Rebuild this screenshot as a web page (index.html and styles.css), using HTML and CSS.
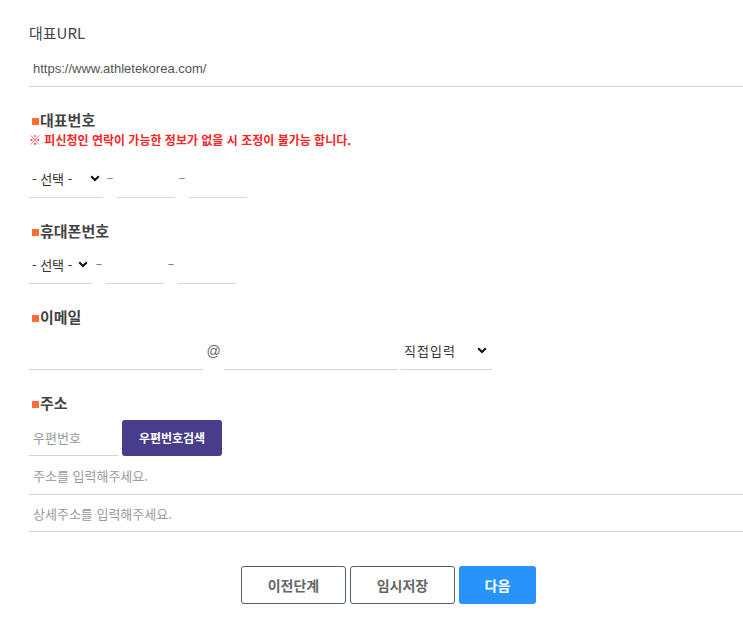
FILE: index.html
```html
<!DOCTYPE html>
<html lang="ko">
<head>
    <meta charset="UTF-8">
    <meta name="viewport" content="width=device-width, initial-scale=1.0">
    <title>단체 정보 입력</title>
    <link rel="stylesheet" href="styles.css">
</head>
<body>

    <div id="form-wrap">
        <div class="field">
            <div class="label plain">대표URL</div>
            <input class="text-input full url" type="text" value="https://www.athletekorea.com/">
        </div>

        <div class="field">
            <div class="label"><span class="mark"></span>대표번호</div>
            <p class="notice">※ 피신청인 연락이 가능한 정보가 없을 시 조정이 불가능 합니다.</p>
            <div class="row">
                <span class="select-wrap w74">
                    <select class="select-input">
                        <option>- 선택 -</option>
                        <option>02</option>
                        <option>031</option>
                    </select>
                    <svg class="chevron" width="10" height="7" viewBox="0 0 10 7"><path d="M1.2 1.2 L5 5 L8.8 1.2" fill="none" stroke="#111" stroke-width="2"/></svg>
                </span>
                <span class="dash">–</span>
                <input class="text-input w58" type="text">
                <span class="dash">–</span>
                <input class="text-input w58" type="text">
            </div>
        </div>

        <div class="field">
            <div class="label"><span class="mark"></span>휴대폰번호</div>
            <div class="row">
                <span class="select-wrap w63">
                    <select class="select-input">
                        <option>- 선택 -</option>
                        <option>010</option>
                        <option>011</option>
                    </select>
                    <svg class="chevron" width="10" height="7" viewBox="0 0 10 7"><path d="M1.2 1.2 L5 5 L8.8 1.2" fill="none" stroke="#111" stroke-width="2"/></svg>
                </span>
                <span class="dash">–</span>
                <input class="text-input w58" type="text">
                <span class="dash">–</span>
                <input class="text-input w58" type="text">
            </div>
        </div>

        <div class="field">
            <div class="label"><span class="mark"></span>이메일</div>
            <div class="row">
                <input class="text-input w174" type="text">
                <span class="at">@</span>
                <input class="text-input w174" type="text">
                <span class="select-wrap w91 gap3">
                    <select class="select-input domain">
                        <option>직접입력</option>
                        <option>naver.com</option>
                        <option>gmail.com</option>
                    </select>
                    <svg class="chevron" width="10" height="7" viewBox="0 0 10 7"><path d="M1.2 1.2 L5 5 L8.8 1.2" fill="none" stroke="#111" stroke-width="2"/></svg>
                </span>
            </div>
        </div>

        <div class="field">
            <div class="label"><span class="mark"></span>주소</div>
            <div class="row">
                <input class="text-input w89" type="text" placeholder="우편번호">
                <button class="zip-btn" type="button">우편번호검색</button>
            </div>
            <input class="text-input full addr" type="text" placeholder="주소를 입력해주세요.">
            <input class="text-input full" type="text" placeholder="상세주소를 입력해주세요.">
        </div>

        <div class="actions">
            <button class="btn outline" type="button">이전단계</button>
            <button class="btn outline" type="button">임시저장</button>
            <button class="btn primary" type="button">다음</button>
        </div>
    </div>

</body>
</html>
```

FILE: styles.css
```css
body {
    margin: 0;
    padding: 0;
    background-color: #ffffff;
    color: #333;
    font-family: 'Noto Sans CJK KR', 'Liberation Sans', sans-serif;
    overflow: hidden;
}

#form-wrap {
    width: 719px;
    margin-left: 29px;
    padding-top: 22px;
}

.field {
    margin-bottom: 22px;
}

.label {
    display: flex;
    align-items: center;
    font-size: 15px;
    font-weight: 700;
    line-height: 22px;
    height: 22px;
    color: #444;
    margin-bottom: 5px;
}

.label.plain {
    font-weight: 400;
    margin-bottom: 6px;
}

.mark {
    display: inline-block;
    width: 7px;
    height: 7px;
    background-color: #ff6b35;
    margin: 2px 1px 0 3px;
}

.notice {
    margin: -5px 0 12px;
    font-size: 12px;
    font-weight: 700;
    line-height: 18px;
    color: #ff2424;
}

.row {
    display: flex;
    align-items: center;
}

.text-input,
.select-input {
    box-sizing: border-box;
    height: 37px;
    border: none;
    border-bottom: 1px solid #d4d4d4;
    outline: none;
    background: transparent;
    font-family: 'Noto Sans CJK KR', 'Liberation Sans', sans-serif;
    font-size: 13px;
    color: #333;
    padding: 0 4px;
    margin: 0;
}

.text-input::placeholder {
    color: #9a9a9a;
}

.full {
    display: block;
    width: 100%;
}

.url {
    font-family: 'Liberation Sans', sans-serif;
    color: #555;
}

.addr {
    height: 39px;
}

.w58 { width: 58px; }
.w63 { width: 63px; }
.w74 { width: 74px; }
.w89 { width: 89px; }
.w91 { width: 91px; }
.w174 { width: 174px; }

.gap3 {
    margin-left: 3px;
}

.select-wrap {
    position: relative;
    display: inline-block;
}

.select-input {
    -webkit-appearance: none;
    appearance: none;
    width: 100%;
    padding: 0 14px 2px 3px;
    border-radius: 0;
}

.domain {
    letter-spacing: 1px;
}

.chevron {
    position: absolute;
    right: 3px;
    top: 14px;
    pointer-events: none;
}

.w63 .chevron {
    right: 4px;
}

.w91 .chevron {
    right: 5px;
}

.dash {
    width: 14px;
    text-align: center;
    font-size: 12px;
    color: #666;
    padding-bottom: 6px;
}

.at {
    width: 21px;
    text-align: center;
    font-family: 'Liberation Sans', sans-serif;
    font-size: 14px;
    color: #666;
    padding-bottom: 2px;
}

.zip-btn {
    margin-left: 4px;
    width: 100px;
    height: 36px;
    border: none;
    border-radius: 3px;
    background-color: #483d8b;
    color: #fff;
    font-family: 'Noto Sans CJK KR', sans-serif;
    font-size: 12px;
    font-weight: 700;
    cursor: pointer;
}

.actions {
    display: flex;
    justify-content: center;
    gap: 4px;
    margin-top: 34px;
}

.btn {
    height: 38px;
    border-radius: 3px;
    font-family: 'Noto Sans CJK KR', sans-serif;
    font-size: 14px;
    font-weight: 700;
    cursor: pointer;
}

.btn.outline {
    width: 105px;
    background-color: #fff;
    border: 1px solid #4f6164;
    color: #666;
}

.btn.primary {
    width: 77px;
    background-color: #2993fc;
    border: none;
    color: #fff;
}
```
